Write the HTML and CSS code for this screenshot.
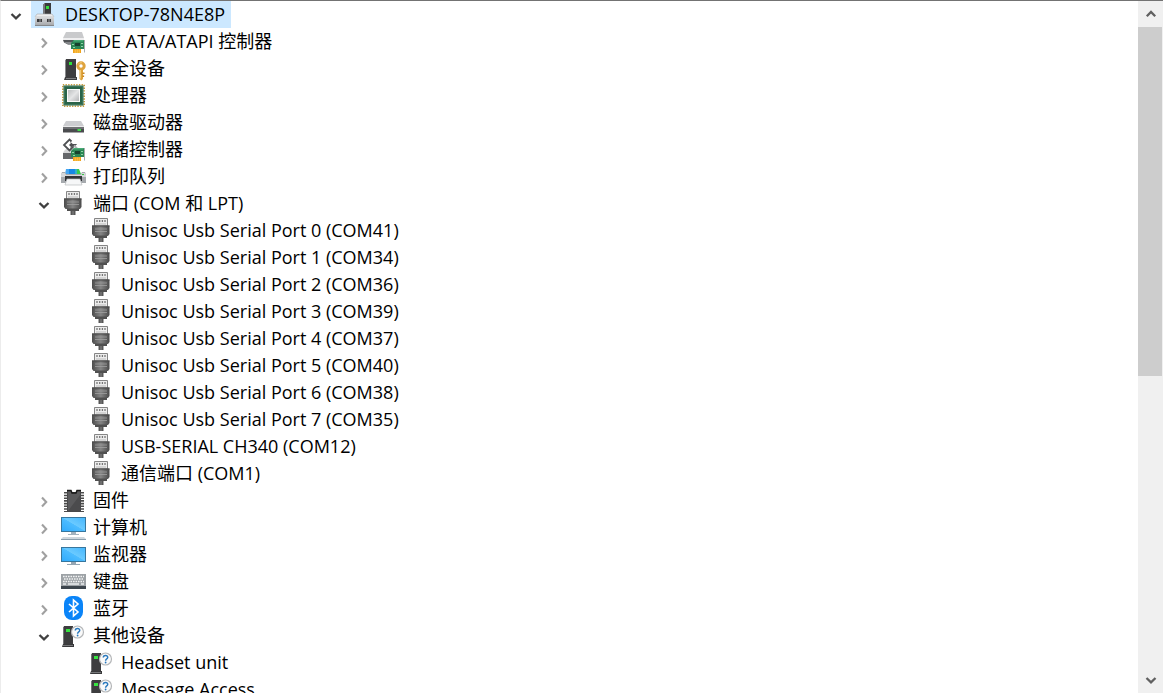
FILE: index.html
```html
<!DOCTYPE html>
<html lang="zh-CN">
<head>
    <meta charset="UTF-8">
    <meta name="viewport" content="width=device-width, initial-scale=1.0">
    <title>设备管理器</title>
    <link rel="stylesheet" href="styles.css">
</head>
<body>
    <!-- 图标 -->
    <svg class="sprite" aria-hidden="true">
        <defs>
            <linearGradient id="g-screen" x1="0" y1="1" x2="1" y2="0">
                <stop offset="0" stop-color="#2fa9fb"/><stop offset="0.5" stop-color="#4dbcff"/><stop offset="0.52" stop-color="#6bcaff"/><stop offset="1" stop-color="#45b6fd"/>
            </linearGradient>
            <linearGradient id="g-metal" x1="0" y1="0" x2="0" y2="1">
                <stop offset="0" stop-color="#dcdddf"/><stop offset="1" stop-color="#a5a7aa"/>
            </linearGradient>
            <linearGradient id="g-plug" x1="0" y1="0" x2="1" y2="0">
                <stop offset="0" stop-color="#4c4c4c"/><stop offset="0.5" stop-color="#858585"/><stop offset="1" stop-color="#4a4a4a"/>
            </linearGradient>
            <linearGradient id="g-die" x1="0" y1="0" x2="1" y2="1">
                <stop offset="0" stop-color="#b9bbbd"/><stop offset="0.5" stop-color="#e4e5e6"/><stop offset="1" stop-color="#aeb0b2"/>
            </linearGradient>
        </defs>
        <symbol id="i-arrow-right" viewBox="0 0 12 12"><path d="M4 1.5 8.2 6 4 10.5" fill="none" stroke="currentColor" stroke-width="2.1"/></symbol>
        <symbol id="i-arrow-down" viewBox="0 0 12 12"><path d="M1.5 4 6 8.4 10.5 4" fill="none" stroke="currentColor" stroke-width="2.3"/></symbol>
        <symbol id="i-arrow-up" viewBox="0 0 12 12"><path d="M1.8 8.2 6 4 10.2 8.2" fill="none" stroke="currentColor" stroke-width="2.3"/></symbol>
        <symbol id="i-pc" viewBox="0 0 28 27">
            <path d="m12 4 2-2h6v12h-8z" fill="#3b3b3d"/><path d="m12 4 2-2v12h-2z" fill="#77787b"/>
            <rect x="15" y="5" width="3" height="3" fill="#35dc3c"/>
            <path d="M6 13h15l2 3H4z" fill="#ededee" stroke="#a6a8ab" stroke-width=".6"/>
            <rect x="4" y="15.5" width="19" height="9" fill="url(#g-metal)"/>
            <path d="M4 24.5h19" stroke="#858789"/>
            <path d="M6 18h5v3H6zM16 18h4v3h-4z" fill="#3c3c3e"/><path d="M8 18h2v3H8zM17 18h2v3h-2z" fill="#6a6b6d"/>
        </symbol>
        <symbol id="i-card" viewBox="0 0 16 14">
            <path d="M1 3 4 0h10v9H1z" fill="#2b8554"/><path d="M4 0h10l-1 1.5H3z" fill="#49ab76"/>
            <path d="M5 3h5v3H5z" fill="#17412d"/><path d="M2 4h2v1H2zM11 3h2v1h-2zM11 6h2v1h-2zM3 7h2v1H3z" fill="#8cd3a5"/>
            <path d="M3 9h8v4H3z" fill="#f0a21a"/><path d="M5.2 9.5v3.5M7.2 9.5v3.5M9.2 9.5v3.5" stroke="#ffd875" stroke-width=".7"/>
            <path d="M14.5 0v12.5" stroke="#a9acae"/>
        </symbol>
        <symbol id="i-ide" viewBox="0 0 28 27">
            <path d="M7 4h16l2 6H4z" fill="#c9cacc"/><path d="M4 10h21v2H4z" fill="#eeeeef"/>
            <path d="M4 12h21v1.5l-2 3H9l-4-2z" fill="#505356"/><path d="M5 14h10v2.5H9z" fill="#85888b"/>
            <use href="#i-card" x="11" y="12" width="16" height="14"/>
        </symbol>
        <symbol id="i-key" viewBox="0 0 28 27">
            <path d="m6 5 2-1v18H6z" fill="#8b8c8e"/><path d="M7 4h10v18H7z" fill="#3d3d3f"/><path d="M6 22h12v3H5z" fill="#3d3d3f"/><path d="M7 23.5h10" stroke="#7c7d7f"/>
            <rect x="10" y="7" width="3" height="3" fill="#30e33a"/>
            <circle cx="22" cy="11" r="3.2" fill="none" stroke="#dfa33c" stroke-width="3"/>
            <path d="M20.5 15h3.500v9l-1.700 1.500-1.800-1.500z" fill="#dfa33c"/><path d="M23.5 17.5h2v1.6h-2zM23.5 20.5h1.6v1.6h-1.6z" fill="#c4831d"/>
            <path d="M19.2 9.5a3.4 3.4 0 0 1 3.6-1.8M21.5 15v8.5" fill="none" stroke="#f5d58a" stroke-width=".8"/>
        </symbol>
        <symbol id="i-cpu" viewBox="0 0 28 27">
            <rect x="3.8" y="2.8" width="21.4" height="21.4" fill="none" stroke="#c79c3c" stroke-width="1.6" stroke-dasharray="1.4 1.28"/>
            <rect x="4.5" y="3.5" width="20" height="20" fill="#2a6348"/>
            <rect x="5.5" y="4.5" width="18" height="18" fill="none" stroke="#3f7d60" stroke-width=".8"/>
            <rect x="8.5" y="7.5" width="12" height="12" fill="url(#g-die)" stroke="#fafafa"/>
        </symbol>
        <symbol id="i-disk" viewBox="0 0 28 27">
            <path d="M7 12h15l3 5H4z" fill="#cccdd0"/><path d="M4 17h21v1H4z" fill="#eaeaeb"/>
            <path d="M4 18h21v5.5H4z" fill="#4a4b4e"/><path d="M4 18h21v2H4z" fill="#6e7073"/><rect x="18.5" y="20" width="3.5" height="2" fill="#41dc4c"/>
        </symbol>
        <symbol id="i-storage" viewBox="0 0 28 27">
            <path d="M4 17h10v6H4z" fill="#65676a"/><path d="m5 15 2-2h8l2 3-3 1H4z" fill="#d6d7d8"/>
            <path d="M12.5 5.5 10.5 3.5 5 9l5.5 5.5L16 9h-5.5" fill="none" stroke="#4e5053" stroke-width="1.8"/>
            <path d="m11.5 6 3.5 3-3.5 3z" fill="#4e5053"/><path d="m15 9.5 3 3" stroke="#b3b5b7" stroke-width="2"/>
            <use href="#i-card" x="11" y="12" width="16" height="14"/>
        </symbol>
        <symbol id="i-printer" viewBox="0 0 28 27">
            <path d="M7 6h4v5H6z" fill="#46a6f1"/><path d="M10 6h7v5h-7z" fill="#1788e5"/><path d="M16 6h3v5h-3z" fill="#31b3c6"/><path d="M18 6h2l2 5h-4z" fill="#37cc4d"/>
            <path d="M3 9h3l1 2h15l1-2h3l1 3v8H2v-8z" fill="#a6aaae"/><path d="M3 10h3l1 2h15l1-2h3l1 2v2H2v-2z" fill="#d7d9db"/>
            <path d="M6 13h17v5H6z" fill="#333538"/><path d="M8 16h13l2 6H6z" fill="#f6f7f8" stroke="#b9bcbf" stroke-width=".7"/>
            <rect x="23" y="11" width="2" height="1" fill="#36ca46"/>
        </symbol>
        <symbol id="i-port" viewBox="0 0 28 27">
            <path d="M7.5 1.500h13V9h-13z" fill="#ececec" stroke="#858585"/>
            <path d="M10 3v2M12.700 3v2M15.400 3v2M18 3v2" stroke="#777" stroke-width="1.300"/>
            <path d="M9 7h10" stroke="#bcbcbc"/>
            <path d="M5 8.500h17.500V17L21 19H6.500L5 17z" fill="url(#g-plug)"/>
            <path d="M5 9h17.500" stroke="#484848"/>
            <path d="M8 12h12M8 14.500h12" stroke="#a0a0a0" stroke-width=".8"/>
            <path d="M8 18.500h12V21H8z" fill="#505050"/><path d="M11.500 21h5v4h-5z" fill="#565656"/><path d="M14 21v4" stroke="#858585"/>
        </symbol>
        <symbol id="i-firmware" viewBox="0 0 28 27">
            <path d="M6.5 5v20M23.5 5v20" stroke="#4b4b4b" stroke-width="3" stroke-dasharray="1.6 1.1"/>
            <path d="M8 3h4l1 2h4l1-2h4v22H8z" fill="#48484a"/><path d="M9 4h2.5l1 2.5h5l1-2.5H21v20H9z" fill="#5a5a5c"/>
            <path d="M9 24 21 8v16z" fill="#4b4b4d"/><path d="M8 3.5h4l1 2.5h4l1-2.5h4" fill="none" stroke="#181818" stroke-width="1.4"/>
        </symbol>
        <symbol id="i-computer" viewBox="0 0 28 27">
            <rect x="2.5" y="3.5" width="24" height="14" fill="url(#g-screen)" stroke="#37769d"/>
            <path d="M12 18h5v2h3v1H9v-1h3z" fill="#a2b2be"/><path d="M4 23h21l2 2H2z" fill="#ced7de"/><path d="M2 25.5h25" stroke="#8b9eac"/>
        </symbol>
        <symbol id="i-monitor" viewBox="0 0 28 27">
            <rect x="2.5" y="6.5" width="24" height="14" fill="url(#g-screen)" stroke="#37769d"/>
            <path d="M12 21h5v2h4v1H8v-1h4z" fill="#95a6b3"/>
        </symbol>
        <symbol id="i-keyboard" viewBox="0 0 28 27">
            <path d="M2 6h25v12H2z" fill="#9da2a6"/><path d="M2 18h25v3H2z" fill="#3d464e"/>
            <path d="M4 8.5h21M5 11h19M4 13.5h21" stroke="#f2f3f4" stroke-width="1.3" stroke-dasharray="1.6 .9"/><path d="M4 16h3M9 16h11M22 16h3" stroke="#eceeef" stroke-width="1.3"/>
        </symbol>
        <symbol id="i-bluetooth" viewBox="0 0 28 27">
            <rect x="5" y="1" width="19" height="24" rx="8" fill="#0a84f8"/>
            <path d="m10 9 9 8-4.5 4V5L19 9l-9 8" fill="none" stroke="#fff" stroke-width="1.6"/>
        </symbol>
        <symbol id="i-unknown" viewBox="0 0 28 27">
            <path d="m4 5 2-1v18H4z" fill="#747577"/><path d="M5 4h9v19H5z" fill="#3d3d3f"/><path d="M4 22h11v3H3z" fill="#39393b"/><path d="M4 23.5h10" stroke="#77787a"/>
            <rect x="7" y="7" width="4" height="3" fill="#37e441"/>
            <circle cx="18.5" cy="10" r="6" fill="#fafafa" stroke="#b5b7b9" stroke-width="1.2"/>
            <path d="M16.3 8.5c0-3 4.7-2.600 4.400 0-.2 1.500-2.100 1.300-2.100 3.200" fill="none" stroke="#2878bd" stroke-width="1.5"/><circle cx="18.6" cy="13.5" r=".9" fill="#2878bd"/>
        </symbol>
    </svg>

    <div class="window">
        <main class="tree-pane">
            <ul class="tree" id="tree"></ul>
        </main>
        <div class="scrollbar">
            <button class="scroll-btn" aria-label="向上滚动"><svg class="arrow"><use href="#i-arrow-up"/></svg></button>
            <div class="scroll-track"><div class="scroll-thumb"></div></div>
            <button class="scroll-btn" aria-label="向下滚动"><svg class="arrow"><use href="#i-arrow-down"/></svg></button>
        </div>
    </div>

    <script src="tree.js"></script>
</body>
</html>
```
FILE: styles.css
```css
* {
    box-sizing: border-box;
}

body {
    margin: 0;
    background-color: #fff;
    color: #000;
    font-family: "Open Sans", "Noto Sans CJK SC", sans-serif;
    font-size: 18px;
    line-height: 27px;
}

.sprite {
    position: absolute;
    width: 0;
    height: 0;
}

.window {
    display: flex;
    height: 100vh;
    overflow: hidden;
    border-top: 1px solid #737373;
    border-left: 1px solid #ececec;
}

.tree-pane {
    flex: 1;
    min-width: 0;
    overflow: hidden;
}

/* 设备树 */
.tree,
.tree ul {
    margin: 0;
    padding: 0;
    list-style: none;
}

.tree ul {
    padding-left: 28px;
}

.row {
    display: flex;
    height: 27px;
}

.toggle {
    display: flex;
    align-items: center;
    justify-content: center;
    flex: none;
    width: 30px;
    padding: 3px 0 0;
    border: none;
    background: none;
    color: #a0a0a0;
}

.toggle.open {
    color: #404040;
}

.arrow {
    width: 12px;
    height: 12px;
}

.label {
    display: flex;
    gap: 6px;
    padding-right: 6px;
    white-space: nowrap;
}

.label.selected {
    background-color: #cce8ff;
}

.icon {
    flex: none;
    width: 28px;
    height: 27px;
}

/* 滚动条 */
.scrollbar {
    display: flex;
    flex-direction: column;
    width: 25px;
    background-color: #f0f0f0;
}

.scroll-btn {
    display: flex;
    align-items: center;
    justify-content: center;
    height: 26px;
    padding: 0;
    border: none;
    background: none;
    color: #606060;
}

.scroll-track {
    display: grid;
    flex: 1;
    grid-template-rows: 6fr 5fr;
}

.scroll-thumb {
    margin-right: 1px;
    background-color: #cdcdcd;
}
```
FILE: tree.js
```javascript
const ports = [
    'Unisoc Usb Serial Port 0 (COM41)',
    'Unisoc Usb Serial Port 1 (COM34)',
    'Unisoc Usb Serial Port 2 (COM36)',
    'Unisoc Usb Serial Port 3 (COM39)',
    'Unisoc Usb Serial Port 4 (COM37)',
    'Unisoc Usb Serial Port 5 (COM40)',
    'Unisoc Usb Serial Port 6 (COM38)',
    'Unisoc Usb Serial Port 7 (COM35)',
    'USB-SERIAL CH340 (COM12)',
    '通信端口 (COM1)'
];

const devices = {
    name: 'DESKTOP-78N4E8P', icon: 'pc', selected: true,
    children: [
        { name: 'IDE ATA/ATAPI 控制器', icon: 'ide' },
        { name: '安全设备', icon: 'key' },
        { name: '处理器', icon: 'cpu' },
        { name: '磁盘驱动器', icon: 'disk' },
        { name: '存储控制器', icon: 'storage' },
        { name: '打印队列', icon: 'printer' },
        { name: '端口 (COM 和 LPT)', icon: 'port', children: ports.map(name => ({ name, icon: 'port', leaf: true })) },
        { name: '固件', icon: 'firmware' },
        { name: '计算机', icon: 'computer' },
        { name: '监视器', icon: 'monitor' },
        { name: '键盘', icon: 'keyboard' },
        { name: '蓝牙', icon: 'bluetooth' },
        { name: '其他设备', icon: 'unknown', children: [
            { name: 'Headset unit', icon: 'unknown', leaf: true },
            { name: 'Message Access', icon: 'unknown', leaf: true }
        ] }
    ]
};

function renderNode(node) {
    const open = !!node.children;
    const toggle = node.leaf
        ? '<span class="toggle"></span>'
        : `<button class="toggle${open ? ' open' : ''}" aria-expanded="${open}" aria-label="${node.name}"><svg class="arrow"><use href="#i-arrow-${open ? 'down' : 'right'}"/></svg></button>`;
    const children = open ? `<ul>${node.children.map(renderNode).join('')}</ul>` : '';
    return `<li>
        <div class="row">
            ${toggle}
            <span class="label${node.selected ? ' selected' : ''}"><svg class="icon"><use href="#i-${node.icon}"/></svg><span>${node.name}</span></span>
        </div>
        ${children}
    </li>`;
}

document.getElementById('tree').innerHTML = renderNode(devices);
```
